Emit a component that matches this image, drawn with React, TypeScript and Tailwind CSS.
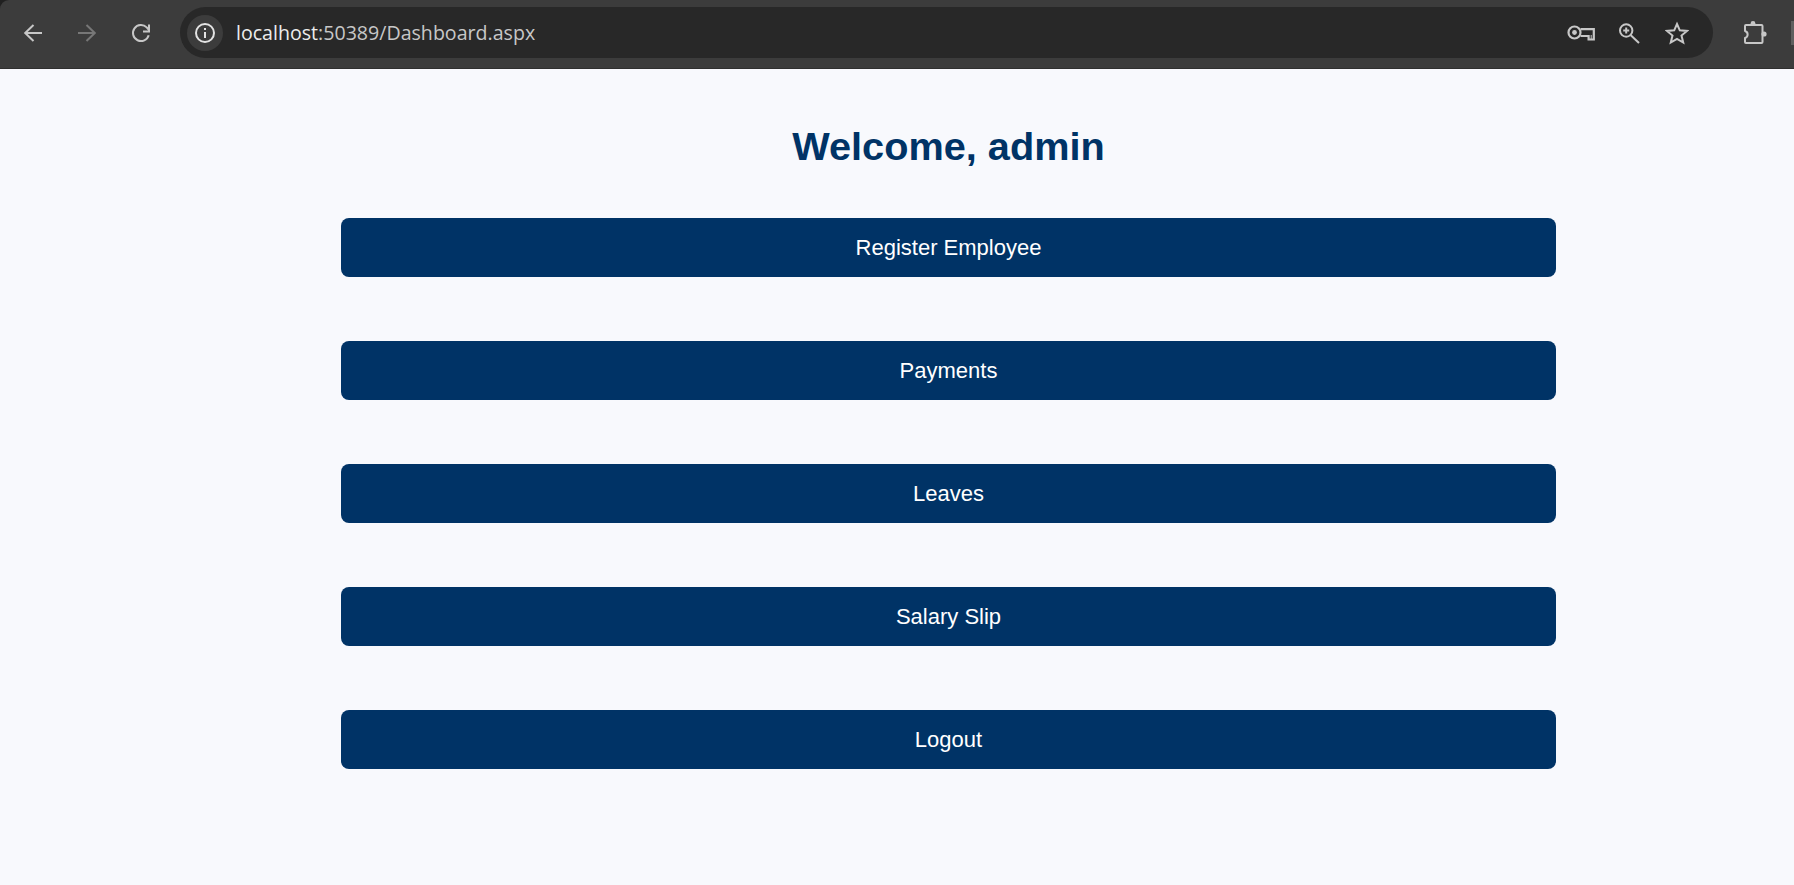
const labels = ["Register Employee", "Payments", "Leaves", "Salary Slip", "Logout"];

function Arrow({ flip = false, color }: { flip?: boolean; color: string }) {
  return (
    <svg width="22" height="22" viewBox="0 0 22 22" fill="none" stroke={color} strokeWidth="2" className={flip ? "-scale-x-100" : ""}>
      <path d="M20 11H3.5M11.5 3L3.2 11L11.5 19" />
    </svg>
  );
}

function Reload() {
  return (
    <svg width="22" height="22" viewBox="0 0 22 22" fill="none" stroke="#c7c7c7" strokeWidth="2">
      <path d="M18.7 13.2A8 8 0 1 1 16.7 5.4L19 8" />
      <path d="M19 2.5V9.5H13" />
    </svg>
  );
}

function Info() {
  return (
    <svg width="22" height="22" viewBox="0 0 22 22" fill="none" stroke="#e3e3e3" strokeWidth="2">
      <circle cx="11" cy="11" r="9" />
      <path d="M11 10V16" />
      <path d="M11 6V8" />
    </svg>
  );
}

function Key() {
  return (
    <svg width="30" height="18" viewBox="0 0 30 18" fill="none" stroke="#c7c7c7" strokeWidth="2.2">
      <circle cx="8.5" cy="8.5" r="6" />
      <circle cx="8.5" cy="8.5" r="2.4" fill="#c7c7c7" stroke="none" />
      <path d="M14.5 5.2H27.8V15.5H22.6V12H14.5" />
      <path d="M25.2 11V15" strokeWidth="1" />
    </svg>
  );
}

function Zoom() {
  return (
    <svg width="24" height="24" viewBox="0 0 24 24" fill="none" stroke="#c7c7c7" strokeWidth="2">
      <circle cx="9.2" cy="9.5" r="6.2" />
      <path d="M13.8 14.2L22 22" />
      <path d="M9.2 6.5V12.5M6.2 9.5H12.2" />
    </svg>
  );
}

function Star() {
  return (
    <svg width="24" height="24" viewBox="0 0 24 24" fill="none" stroke="#c7c7c7" strokeWidth="2">
      <path d="M12 3L14.8 9.3L22 9.9L16.5 14.6L18.2 21.5L12 17.8L5.8 21.5L7.5 14.6L2 9.9L9.2 9.3Z" />
    </svg>
  );
}

function Puzzle() {
  return (
    <svg width="26" height="26" viewBox="0 0 26 26" fill="none" stroke="#c7c7c7" strokeWidth="2" strokeLinejoin="round">
      <path d="M4 5H19.5a1 1 0 0 1 1 1V22a1 1 0 0 1-1 1H4a1 1 0 0 1-1-1V18C6.5 17 6.5 12 3 11V6a1 1 0 0 1 1-1Z" />
      <circle cx="11" cy="3.5" r="2.4" fill="#c7c7c7" stroke="none" />
      <circle cx="22" cy="14" r="2.6" fill="#c7c7c7" stroke="none" />
    </svg>
  );
}

export default function App() {
  return (
    <div className="flex min-h-[885px] flex-col bg-[#f8f9fd] font-['Liberation_Sans',Arial,sans-serif]">
      <div className="bg-[#202020]">
        <header className="flex h-[69px] items-center rounded-tl-[9px] border-b border-[#2f2f2f] bg-[#3c3c3c] pb-[3px] pl-[6px]">
          <div className="flex w-[54px] justify-center"><Arrow color="#c7c7c7" /></div>
          <div className="flex w-[54px] justify-center"><Arrow flip color="#777777" /></div>
          <div className="flex w-[54px] justify-center"><Reload /></div>
          <div className="ml-[12px] flex h-[51px] w-[1533px] shrink-0 items-center rounded-full bg-[#282828] pl-[7px] pr-[12px]">
            <div className="flex h-[36px] w-[36px] items-center justify-center rounded-full bg-[#3c3c3c]"><Info /></div>
            <div className="ml-[13px] whitespace-nowrap font-['Open_Sans',sans-serif] text-[19.6px] text-[#c7c7c7]">
              <span className="text-[#ececec]">localhost</span>:50389/Dashboard.aspx
            </div>
            <div className="ml-auto flex items-center">
              <div className="flex w-[48px] justify-center"><Key /></div>
              <div className="flex w-[48px] justify-center"><Zoom /></div>
              <div className="flex w-[48px] justify-center"><Star /></div>
            </div>
          </div>
          <div className="ml-[29px] flex w-[26px] shrink-0 justify-center"><Puzzle /></div>
          <div className="ml-[23px] h-[24px] w-[3px] shrink-0 bg-[#5f5f5f]" />
        </header>
      </div>
      <main className="ml-[341px] flex w-[1215px] flex-col">
        <h1 className="mt-[54px] text-center text-[39.7px] font-bold leading-[46px] text-[#003366]">Welcome, admin</h1>
        <div className="mt-[49px] flex flex-col gap-[64px]">
          {labels.map((l) => (
            <button key={l} className="h-[59px] rounded-[8px] bg-[#003366] text-center text-[22px] text-white">
              {l}
            </button>
          ))}
        </div>
      </main>
    </div>
  );
}
